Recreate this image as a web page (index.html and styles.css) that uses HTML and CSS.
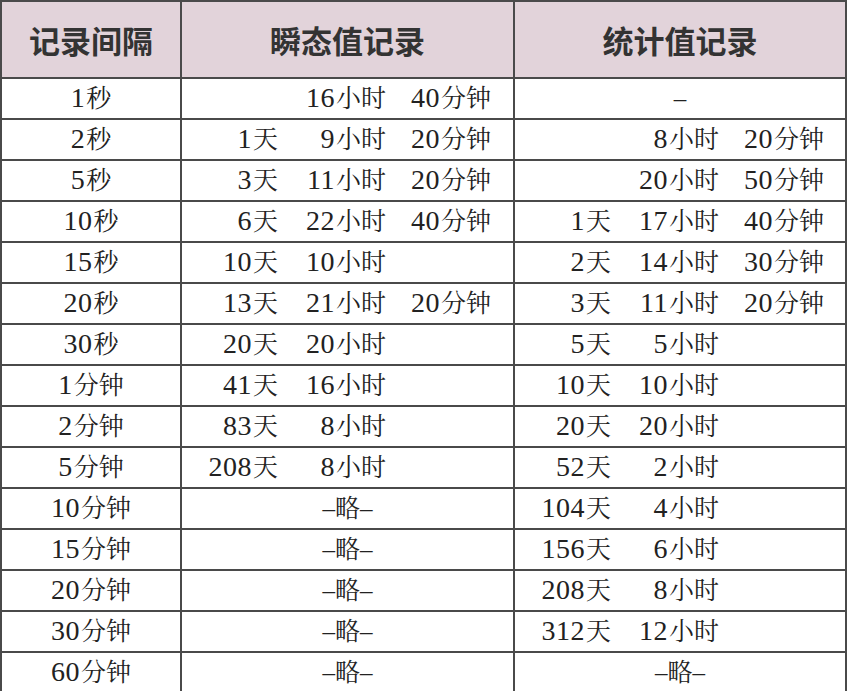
FILE: index.html
```html
<!DOCTYPE html>
<html lang="zh">
<head>
<meta charset="utf-8">
<link rel="stylesheet" href="styles.css">
</head>
<body>
<table class="tbl">
  <colgroup><col class="c1"><col class="c2"><col class="c3"></colgroup>
  <thead>
    <tr><th>记录间隔</th><th>瞬态值记录</th><th>统计值记录</th></tr>
  </thead>
  <tbody>
    <tr><td class="iv"><b class="n">1</b>秒</td><td><div class="t"><span></span><span><b class="n">16</b>小时</span><span><b class="n">40</b>分钟</span></div></td><td class="mid">–</td></tr>
    <tr><td class="iv"><b class="n">2</b>秒</td><td><div class="t"><span><b class="n">1</b>天</span><span><b class="n">9</b>小时</span><span><b class="n">20</b>分钟</span></div></td><td><div class="t"><span></span><span><b class="n">8</b>小时</span><span><b class="n">20</b>分钟</span></div></td></tr>
    <tr><td class="iv"><b class="n">5</b>秒</td><td><div class="t"><span><b class="n">3</b>天</span><span><b class="n">11</b>小时</span><span><b class="n">20</b>分钟</span></div></td><td><div class="t"><span></span><span><b class="n">20</b>小时</span><span><b class="n">50</b>分钟</span></div></td></tr>
    <tr><td class="iv"><b class="n">10</b>秒</td><td><div class="t"><span><b class="n">6</b>天</span><span><b class="n">22</b>小时</span><span><b class="n">40</b>分钟</span></div></td><td><div class="t"><span><b class="n">1</b>天</span><span><b class="n">17</b>小时</span><span><b class="n">40</b>分钟</span></div></td></tr>
    <tr><td class="iv"><b class="n">15</b>秒</td><td><div class="t"><span><b class="n">10</b>天</span><span><b class="n">10</b>小时</span><span></span></div></td><td><div class="t"><span><b class="n">2</b>天</span><span><b class="n">14</b>小时</span><span><b class="n">30</b>分钟</span></div></td></tr>
    <tr><td class="iv"><b class="n">20</b>秒</td><td><div class="t"><span><b class="n">13</b>天</span><span><b class="n">21</b>小时</span><span><b class="n">20</b>分钟</span></div></td><td><div class="t"><span><b class="n">3</b>天</span><span><b class="n">11</b>小时</span><span><b class="n">20</b>分钟</span></div></td></tr>
    <tr><td class="iv"><b class="n">30</b>秒</td><td><div class="t"><span><b class="n">20</b>天</span><span><b class="n">20</b>小时</span><span></span></div></td><td><div class="t"><span><b class="n">5</b>天</span><span><b class="n">5</b>小时</span><span></span></div></td></tr>
    <tr><td class="iv"><b class="n">1</b>分钟</td><td><div class="t"><span><b class="n">41</b>天</span><span><b class="n">16</b>小时</span><span></span></div></td><td><div class="t"><span><b class="n">10</b>天</span><span><b class="n">10</b>小时</span><span></span></div></td></tr>
    <tr><td class="iv"><b class="n">2</b>分钟</td><td><div class="t"><span><b class="n">83</b>天</span><span><b class="n">8</b>小时</span><span></span></div></td><td><div class="t"><span><b class="n">20</b>天</span><span><b class="n">20</b>小时</span><span></span></div></td></tr>
    <tr><td class="iv"><b class="n">5</b>分钟</td><td><div class="t"><span><b class="n">208</b>天</span><span><b class="n">8</b>小时</span><span></span></div></td><td><div class="t"><span><b class="n">52</b>天</span><span><b class="n">2</b>小时</span><span></span></div></td></tr>
    <tr><td class="iv"><b class="n">10</b>分钟</td><td class="mid">–略–</td><td><div class="t"><span><b class="n">104</b>天</span><span><b class="n">4</b>小时</span><span></span></div></td></tr>
    <tr><td class="iv"><b class="n">15</b>分钟</td><td class="mid">–略–</td><td><div class="t"><span><b class="n">156</b>天</span><span><b class="n">6</b>小时</span><span></span></div></td></tr>
    <tr><td class="iv"><b class="n">20</b>分钟</td><td class="mid">–略–</td><td><div class="t"><span><b class="n">208</b>天</span><span><b class="n">8</b>小时</span><span></span></div></td></tr>
    <tr><td class="iv"><b class="n">30</b>分钟</td><td class="mid">–略–</td><td><div class="t"><span><b class="n">312</b>天</span><span><b class="n">12</b>小时</span><span></span></div></td></tr>
    <tr><td class="iv"><b class="n">60</b>分钟</td><td class="mid">–略–</td><td class="mid">–略–</td></tr>
  </tbody>
</table>
</body>
</html>
```
FILE: styles.css
```css
html, body {
  margin: 0;
  padding: 0;
  background: #ffffff;
}
.tbl {
  border-collapse: collapse;
  table-layout: fixed;
  width: 845px;
  color: #222;
  font-family: "Liberation Serif", "Noto Serif CJK SC", "Source Han Serif SC", "AR PL UMing CN", "Noto Sans CJK SC", serif;
  font-size: 25px;
}
.c1 { width: 180px; }
.c2 { width: 333px; }
.c3 { width: 332px; }
.tbl th, .tbl td {
  border: 2px solid #4a4a4a;
  padding: 0;
}
.tbl th {
  height: 75px;
  background: #e2d3da;
  font-family: "Noto Sans CJK SC", sans-serif;
  font-weight: 700;
  font-size: 31px;
  color: #333;
  text-align: center;
}
.tbl td {
  height: 39px;
  line-height: 39px;
}
.n {
  font-weight: 400;
  font-size: 28px;
  line-height: 1;
  letter-spacing: 0.5px;
  margin-right: 1px;
}
.iv, .mid {
  text-align: center;
}
.t {
  display: grid;
  grid-template-columns: 96px 108px 105px;
  justify-items: end;
}
```
